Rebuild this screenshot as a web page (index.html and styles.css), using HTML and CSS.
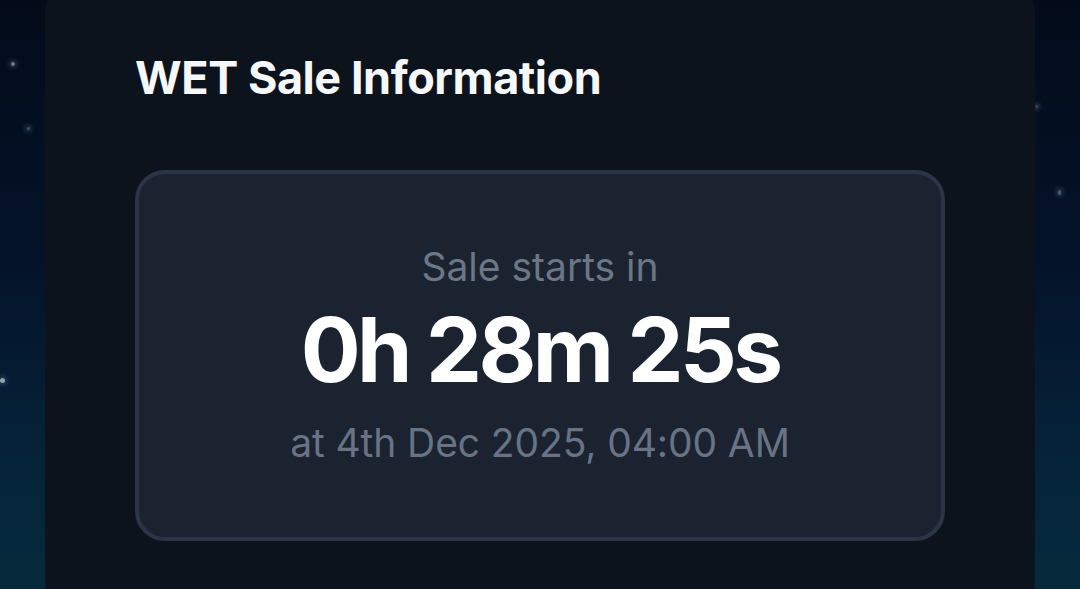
FILE: index.html
```html
<!DOCTYPE html>
<html>
<head>
<meta charset="utf-8">
<link rel="stylesheet" href="styles.css">
</head>
<body>
<div class="sky">
  <span class="star s1"></span>
  <span class="star s2"></span>
  <span class="star s3"></span>
  <span class="star s4"></span>
  <span class="star s5"></span>
  <section class="card">
    <h2 class="title">WET Sale Information</h2>
    <div class="countdown">
      <div class="label">Sale starts in</div>
      <div class="timer">0h 28m 25s</div>
      <div class="date">at 4th Dec 2025, 04:00 AM</div>
    </div>
  </section>
</div>
</body>
</html>
```
FILE: styles.css
```css
html, body {
  margin: 0;
  padding: 0;
  height: 100%;
  overflow: hidden;
}
body {
  font-family: Inter, "Noto Sans", sans-serif;
  background: #040c1a;
}
.sky {
  display: flow-root;
  position: relative;
  height: 589px;
  background: linear-gradient(180deg, #030b19 0%, #04132a 45%, #05243a 80%, #062a3c 100%);
  padding: 0 45px;
  box-sizing: border-box;
  overflow: hidden;
}
.star {
  position: absolute;
  border-radius: 50%;
  background: rgba(200, 210, 225, 0.55);
  box-shadow: 0 0 4px 2px rgba(150, 170, 200, 0.25);
}
.s1 { left: 11px; top: 62px; width: 4px; height: 4px; }
.s2 { left: 27px; top: 127px; width: 3px; height: 3px; background: rgba(170, 185, 205, 0.4); }
.s3 { left: 0px; top: 378px; width: 5px; height: 5px; background: rgba(210, 220, 230, 0.7); }
.s4 { left: 1035px; top: 105px; width: 3px; height: 3px; background: rgba(150, 165, 190, 0.35); }
.s5 { left: 1058px; top: 190px; width: 3px; height: 5px; background: rgba(170, 185, 205, 0.45); }
.card {
  position: relative;
  background: #0c131d;
  border-radius: 26px 26px 0 0;
  margin-top: -14px;
  height: 603px;
  padding: 65px 90px 0;
  box-sizing: border-box;
}
.title {
  margin: 0;
  font-size: 45px;
  line-height: 54px;
  font-weight: 700;
  color: #f6f7f9;
  letter-spacing: -0.45px;
}
.countdown {
  margin-top: 65px;
  height: 371px;
  box-sizing: border-box;
  padding-top: 69px;
  border: 4px solid #2c3547;
  border-radius: 30px;
  background: #1b2330;
  display: flex;
  flex-direction: column;
  align-items: center;
  text-align: center;
}
.label {
  font-size: 39px;
  line-height: 48px;
  color: #6b7686;
}
.timer {
  font-size: 89px;
  font-weight: 700;
  line-height: 100px;
  color: #ffffff;
  letter-spacing: -3.7px;
  margin-top: 9px;
}
.date {
  font-size: 39px;
  line-height: 48px;
  color: #687385;
  margin-top: 19px;
  letter-spacing: -0.1px;
}
```
